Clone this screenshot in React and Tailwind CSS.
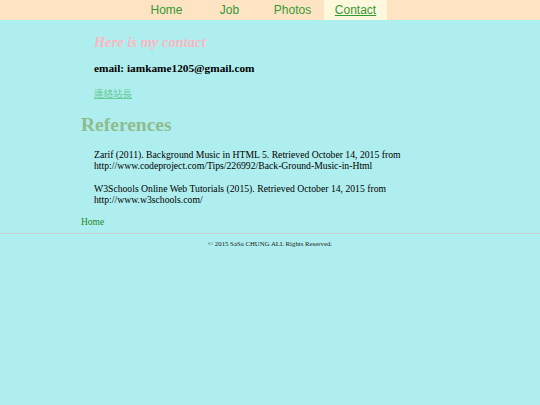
export default function App() {
  const nav = ['Home', 'Job', 'Photos', 'Contact'];
  return (
    <div className="min-h-[405px] bg-[#afeeee] font-['Liberation_Serif',serif]">
      <nav className="h-5 bg-[#ffe4c4]">
        <ul className="flex h-5 pl-[135px] font-['Liberation_Sans',Arial,sans-serif] text-[12px]">
          {nav.map((n) => (
            <li
              key={n}
              className={`flex w-[63px] items-center justify-center ${n === 'Contact' ? 'bg-[#fff8dc] underline' : ''} text-[#339933]`}
            >
              {n}
            </li>
          ))}
        </ul>
      </nav>

      <div className="pl-[94px] pt-[13px]">
        <h2 className="text-[14.5px] font-bold italic leading-[18px] text-[#ffb6c1]">Here is my contact</h2>
        <p className="mt-[10px] text-[11.3px] font-bold leading-[15px] text-black">email: iamkame1205@gmail.com</p>
        <a className="mt-[12px] block text-[9.5px] leading-[13px] text-[#66cc99] underline font-['Liberation_Serif','Noto_Sans_CJK_TC',serif]" href="#">
          連絡站長
        </a>
      </div>

      <h1 className="mt-[12px] pl-[81px] text-[19.5px] font-bold leading-[24px] text-[#8fbc8f]">References</h1>

      <div className="pl-[94px] pt-[12px] text-[9.7px] leading-[11px] text-black">
        <p>
          Zarif (2011). Background Music in HTML 5. Retrieved October 14, 2015 from
          <br />
          http://www.codeproject.com/Tips/226992/Back-Ground-Music-in-Html
        </p>
        <p className="mt-[12px]">
          W3Schools Online Web Tutorials (2015). Retrieved October 14, 2015 from
          <br />
          http://www.w3schools.com/
        </p>
      </div>

      <a href="#" className="mt-[11px] block pl-[81px] text-[9.5px] leading-[13px] text-[#228b22]">
        Home
      </a>
      <hr className="mt-[4px] border-t border-[#c8cccc]" />
      <p className="mt-[5px] text-center text-[6.8px] leading-[9px] text-[#222]">© 2015 SaSa CHUNG ALL Rights Reserved.</p>
    </div>
  );
}
